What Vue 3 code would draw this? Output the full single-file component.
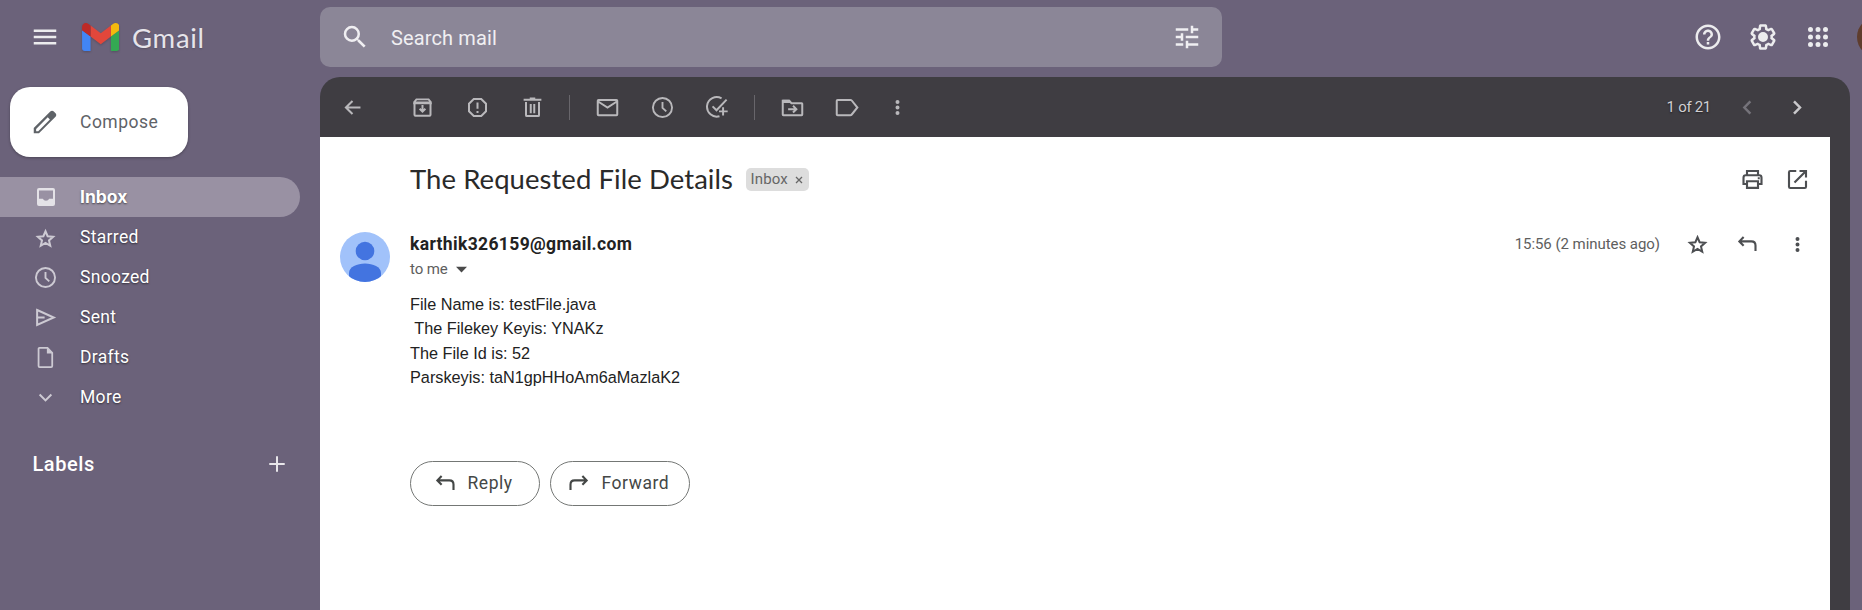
<script setup>
// Filled glyphs use `f`, stroked outlines use `s`; all on a 20-unit grid unless `box` is given.
const icons = {
  back: { s: 'M17 10H4.2M10 4.2 4.2 10l5.8 5.8', sw: 1.8, box: '-1 -1 22 22' },
  archive: { s: 'M3.6 6.2v9.6q0 .7.7.7h11.4q.7 0 .7-.7V6.2M10 8v5M7.7 11l2.3 2.3 2.3-2.3', f: 'M4.8 2.8h10.4l2.2 2.6v1.9H2.6V5.4zm.8 1.3-.9 1h10.6l-.9-1z' },
  spam: { s: 'M7 3.2h6L16.8 7v6L13 16.8H7L3.2 13V7zM10 6v5M10 12.7v1.6' },
  trash: { s: 'M4.8 5.5v10.6q0 .7.7.7h9q.7 0 .7-.7V5.5M8.6 7.2v7.3M11.4 7.2v7.3', f: 'M7.8 2h4.4v1h4.9v1.6H2.9V3h4.9z' },
  mail: { s: 'M2.8 3.9h14.4q.6 0 .6.6v11q0 .6-.6.6H2.8q-.6 0-.6-.6v-11q0-.6.6-.6zM2.5 5.2l7.5 4.9 7.5-4.9' },
  clock: { s: 'M10 .9a9.1 9.1 0 1 0 0 18.2a9.1 9.1 0 1 0 0-18.2zM10 4.8v5.5l3.6 3.4', sw: 1.8 },
  task: { s: 'M14.2 2.1A8.9 8.9 0 1 0 12.3 18.4M6 9.4l3.6 3.6 9.2-9.8M15.6 10.3v7.4M11.9 14h7.9', box: '0 0 21 20', sw: 1.8 },
  move: { s: 'M2.2 4.6h5l2 1.9h8.2q.4 0 .4.5v8.6q0 .5-.5.5H2.7q-.5 0-.5-.5zM6.5 11.3h6.3M10.4 8.6l2.7 2.7-2.7 2.7', f: 'M2 3.8h5.8l1.8 2.6H2z' },
  label: { s: 'M2.1 3.9h10.2q.7 0 1.1.5l4.5 5.6-4.5 5.6q-.4.5-1.1.5H2.1q-.7 0-.7-.6V4.5q0-.6.7-.6z' },
  more: { f: 'M10 4a1.6 1.6 0 1 1 0 3.2 1.6 1.6 0 0 1 0-3.2zm0 4.4a1.6 1.6 0 1 1 0 3.2 1.6 1.6 0 0 1 0-3.2zm0 4.4a1.6 1.6 0 1 1 0 3.2 1.6 1.6 0 0 1 0-3.2z' },
  prev: { s: 'M12.3 5.1 7.5 10l4.8 4.9', sw: 2 },
  next: { s: 'M7.2 5.1l4.8 4.9-4.8 4.9', sw: 2 },
  print: { s: 'M5.6 6.2V3.2h8.8v3M5.6 13.6H2.8V8.5Q2.8 6.6 4.6 6.6h10.8q1.8 0 1.8 1.9v5.1h-2.8M5.6 11.4h8.8v5.3H5.6zM14.2 9h1.6', sw: 1.7 },
  open: { s: 'M9 3.2H4.2q-1 0-1 1v11.6q0 1 1 1h11.6q1 0 1-1V11M11.6 3.2h5.2v5.2M16.6 3.4 7.6 12.4', sw: 1.7 },
  star: { s: 'M10 4.2l1.7 4 4.4.4-3.3 2.9 1 4.3-3.8-2.3-3.8 2.3 1-4.3-3.3-2.9 4.4-.4z', sw: 1.6 },
  reply: { s: 'M6.9 4 3.5 7.5l3.4 3.5M3.7 7.5h9.4q3.3 0 3.3 3.3v4.4', sw: 1.7 },
  forward: { s: 'M13.1 4l3.4 3.5-3.4 3.5M16.3 7.5H6.9q-3.3 0-3.3 3.3v4.4', sw: 1.7 },
  inbox: { f: 'M3 1h14q2 0 2 2v14q0 2-2 2H3q-2 0-2-2V3q0-2 2-2zm0 2.6v8.1h3.8q.9 2 3.2 2t3.2-2H17V3.6z' },
  sent: { s: 'M3.3 4 16.6 10 3.3 16zM3.3 10h6' },
  draft: { s: 'M4.4.9h7.5l4.5 4.6v12.6q0 1-1 1H4.4q-1 0-1-1V1.9q0-1 1-1z', f: 'M11.3.9l5.3 5.3h-5.3z', sw: 1.7 },
  chevron: { s: 'M4.4 7.2 10 12.8l5.6-5.6', sw: 1.9 },
  plus: { s: 'M10 1.5v17M1.5 10h17', sw: 2.2, box: '1.2 1.2 17.6 17.6' },
  pencil: { f: 'M20.41 4.94l-1.35-1.35c-.78-.78-2.05-.78-2.83 0L3 16.82V21h4.18L20.41 7.77c.79-.78.79-2.05 0-2.83zM6.6 19.4H4.9v-1.8L14.2 8.2l1.7 1.7z', box: '0 0 24 24' },
  menu: { f: 'M3 18h18v-2H3v2zm0-5h18v-2H3v2zm0-7v2h18V6H3z', box: '0 0 24 24' },
  search: { f: 'M15.5 14h-.79l-.28-.27A6.47 6.47 0 0 0 16 9.5 6.5 6.5 0 1 0 9.5 16c1.61 0 3.09-.59 4.23-1.57l.27.28v.79l5 4.99L20.49 19zm-6 0a4.5 4.5 0 1 1 0-9 4.5 4.5 0 0 1 0 9z', box: '0 0 24 24' },
  tune: { f: 'M3 17v2h6v-2zM3 5v2h10V5zm10 16v-2h8v-2h-8v-2h-2v6zM7 9v2H3v2h4v2h2V9zm14 4v-2H11v2zm-6-4h2V7h4V5h-4V3h-2z', box: '0 0 24 24' },
  help: { f: 'M11 18h2v-2h-2v2zm1-16C6.48 2 2 6.48 2 12s4.48 10 10 10 10-4.48 10-10S17.52 2 12 2zm0 18c-4.41 0-8-3.59-8-8s3.59-8 8-8 8 3.59 8 8-3.59 8-8 8zm0-14c-2.21 0-4 1.79-4 4h2c0-1.1.9-2 2-2s2 .9 2 2c0 2-3 1.75-3 5h2c0-2.25 3-2.5 3-5 0-2.21-1.79-4-4-4z', box: '0 0 24 24' },
  gear: { f: 'M13.85 22.25h-3.7c-.74 0-1.36-.54-1.45-1.27l-.27-1.89c-.27-.14-.53-.29-.79-.46l-1.8.72c-.7.26-1.47-.03-1.81-.65L2.2 15.53c-.35-.66-.2-1.44.36-1.88l1.53-1.19c-.01-.15-.02-.3-.02-.46 0-.15.01-.31.02-.46l-1.52-1.19c-.59-.45-.74-1.26-.37-1.88l1.85-3.19c.34-.62 1.11-.9 1.79-.63l1.81.73c.26-.17.52-.32.78-.46l.27-1.91c.09-.7.71-1.25 1.44-1.25h3.7c.74 0 1.36.54 1.45 1.27l.27 1.89c.27.14.53.29.79.46l1.8-.72c.71-.26 1.48.03 1.82.65l1.84 3.18c.36.66.2 1.44-.36 1.88l-1.52 1.19c.01.15.02.3.02.46s-.01.31-.02.46l1.52 1.19c.56.45.72 1.23.37 1.86l-1.86 3.22c-.34.62-1.11.9-1.8.63l-1.8-.72c-.26.17-.52.32-.78.46l-.27 1.91c-.1.68-.72 1.22-1.46 1.22zm-3.23-2h2.76l.37-2.55.53-.22c.44-.18.88-.44 1.34-.78l.45-.34 2.38.96 1.38-2.4-2.03-1.58.07-.56c.03-.26.06-.51.06-.78s-.03-.53-.06-.78l-.07-.56 2.03-1.58-1.39-2.4-2.39.96-.45-.35c-.42-.32-.87-.58-1.33-.77l-.52-.22-.37-2.55h-2.76l-.37 2.55-.53.21c-.44.19-.88.44-1.34.79l-.45.33-2.38-.95-1.39 2.39 2.03 1.58-.07.56a7 7 0 0 0-.06.79c0 .26.02.53.06.78l.07.56-2.03 1.58 1.38 2.4 2.39-.96.45.35c.43.33.86.58 1.33.77l.53.22.38 2.55zM12 8a4 4 0 1 1 0 8 4 4 0 0 1 0-8z', box: '0 0 24 24' },
  apps: { f: [6, 12, 18].flatMap(y => [6, 12, 18].map(x => `M${x - 2} ${y}a2 2 0 1 1 4 0 2 2 0 1 1-4 0z`)).join(''), box: '0 0 24 24' },
  close: { s: 'M4 4l12 12M16 4 4 16', sw: 2.6 },
  caret: { f: 'M0 5h20L10 15.5z' }
}

const Icon = (props) => {
  const i = icons[props.name]
  return h('svg', { viewBox: i.box || '0 0 20 20', fill: 'none', 'aria-hidden': 'true' }, [
    i.s && h('path', { d: i.s, stroke: 'currentColor', 'stroke-width': i.sw || 1.6 }),
    i.f && h('path', { d: i.f, fill: 'currentColor', 'fill-rule': 'evenodd' })
  ])
}
Icon.props = ['name']

const nav = [
  { id: 'inbox', icon: 'inbox', text: 'Inbox' },
  { id: 'starred', icon: 'star', text: 'Starred' },
  { id: 'snoozed', icon: 'clock', text: 'Snoozed' },
  { id: 'sent', icon: 'sent', text: 'Sent' },
  { id: 'drafts', icon: 'draft', text: 'Drafts' },
  { id: 'more-nav', icon: 'chevron', text: 'More' }
]
const groups = [['archive', 'spam', 'trash'], ['mail', 'clock', 'task'], ['move', 'label', 'more']]
</script>

<script>
import { h } from 'vue'
</script>

<template>
  <div class="app">
    <aside class="side">
      <div class="brand">
        <Icon class="menu" name="menu" />
        <svg class="logo" viewBox="52 42 88 66" aria-hidden="true">
          <path fill="#4285f4" d="M58 108h14V74L52 59v43c0 3.32 2.69 6 6 6" />
          <path fill="#34a853" d="M120 108h14c3.32 0 6-2.69 6-6V59l-20 15" />
          <path fill="#f4b90e" d="M120 48v26l20-15v-8c0-7.42-8.47-11.65-14.4-7.2" />
          <path fill="#e2473b" d="M72 74V48l24 18 24-18v26L96 92" />
          <path fill="#bd2a26" d="M52 51v8l20 15V48l-5.6-4.2c-5.94-4.45-14.4-.22-14.4 7.2" />
        </svg>
        <span class="wordmark">Gmail</span>
      </div>
      <button class="compose"><Icon name="pencil" /><span>Compose</span></button>
      <nav>
        <a v-for="n in nav" :key="n.id" :class="['item', n.id]"><Icon :name="n.icon" /><span>{{ n.text }}</span></a>
      </nav>
      <div class="labels"><span>Labels</span><Icon name="plus" /></div>
    </aside>

    <div class="right">
      <header class="top">
        <div class="search"><Icon name="search" /><span>Search mail</span><Icon name="tune" /></div>
        <div class="tools"><Icon name="help" /><Icon name="gear" /><Icon name="apps" /><i class="account"></i></div>
      </header>

      <main class="panel">
        <div class="bar">
          <Icon class="back" name="back" />
          <div v-for="(g, k) in groups" :key="k" class="group"><Icon v-for="n in g" :key="n" :name="n" :class="n" /></div>
          <span class="count">1 of 21</span>
          <Icon class="prev" name="prev" />
          <Icon class="next" name="next" />
        </div>

        <section class="mail-view">
          <div class="subject">
            <h1>The Requested File Details</h1>
            <span class="chip"><span>Inbox</span><Icon name="close" /></span>
            <Icon class="print" name="print" />
            <Icon name="open" />
          </div>
          <div class="message">
            <svg class="avatar" viewBox="0 0 50 50" aria-hidden="true">
              <defs><clipPath id="disc"><circle cx="25" cy="25" r="25" /></clipPath></defs>
              <g clip-path="url(#disc)">
                <path fill="#a1c2fa" d="M0 0h50v50H0z" />
                <circle cx="25" cy="19" r="9.3" fill="#4374e0" />
                <path fill="#4374e0" d="M9 50V41c0-6 8-9.5 16-9.5S41 35 41 41v9z" />
              </g>
            </svg>
            <div class="content">
              <div class="meta">
                <div>
                  <div class="sender">karthik326159@gmail.com</div>
                  <div class="to"><span>to me</span><Icon name="caret" /></div>
                </div>
                <div class="actions">
                  <span class="time">15:56 (2 minutes ago)</span>
                  <Icon class="fav" name="star" /><Icon name="reply" /><Icon name="more" />
                </div>
              </div>
              <pre class="body">File Name is: testFile.java
 The Filekey Keyis: YNAKz
The File Id is: 52
Parskeyis: taN1gpHHoAm6aMazlaK2</pre>
              <div class="buttons">
                <button class="reply"><Icon name="reply" /><span>Reply</span></button>
                <button class="forward"><Icon name="forward" /><span>Forward</span></button>
              </div>
            </div>
          </div>
        </section>
      </main>
    </div>
  </div>
</template>

<style>
body { overflow: hidden; }
</style>

<style scoped>
.app { display: flex; width: 1862px; height: 610px; overflow: hidden; background: #6b627a; font-family: Roboto, "Liberation Sans", sans-serif; color: #fff; }
svg { width: 25px; height: 25px; flex: none; display: block; }
button { border: 0; padding: 0; font: inherit; box-sizing: border-box; display: flex; align-items: center; }

.side { width: 320px; flex: none; }
.brand { height: 87px; box-sizing: border-box; padding: 0 0 13px 30px; display: flex; align-items: center; color: #ececee; }
.brand .menu { width: 30px; height: 30px; }
.brand .logo { width: 37.5px; height: 28px; margin-left: 21.5px; filter: drop-shadow(0 1px 1px rgba(0,0,0,.2)); }
.wordmark { margin-left: 13px; padding-top: 1px; font: 27.5px/34px Lato, sans-serif; letter-spacing: .7px; color: #e6e4ea; text-shadow: 0 1px 2px rgba(0,0,0,.2); }
.compose { width: 178px; height: 70px; margin-left: 10px; padding-left: 20px; border-radius: 20px; background: #fff; color: #5f6368; font-size: 17.5px; font-weight: 450; letter-spacing: .5px; box-shadow: 0 1px 3px rgba(0,0,0,.3); }
.compose svg { width: 30px; height: 30px; margin-right: 20px; }
nav { margin-top: 20px; }
.item { display: flex; align-items: center; width: 300px; height: 40px; box-sizing: border-box; padding-left: 33px; border-radius: 0 20px 20px 0; font-size: 17.5px; font-weight: 450; letter-spacing: .32px; text-shadow: 0 1px 2px rgba(0,0,0,.55); }
.item svg { margin-right: 22px; color: #cdcad3; }
.item.inbox { background: #9991a3; font: 700 17.5px Inter, sans-serif; letter-spacing: 0; }
.item.inbox span { padding-bottom: 1px; }
.item.inbox svg { width: 20px; height: 20px; margin: 0 24.5px 0 2.5px; color: #e4e2e7; }
.item.starred svg { margin-top: 2px; }
.item.snoozed svg, .item.drafts svg { width: 21px; height: 21px; margin: 0 24px 0 2px; }
.item.more-nav svg { width: 21px; height: 21px; margin: 0 24px 0 2px; }
.labels { display: flex; align-items: center; justify-content: space-between; width: 253px; margin: 34px 0 0 32.5px; height: 25px; font-size: 20px; font-weight: 500; letter-spacing: .55px; }
.labels svg { width: 16px; height: 16px; margin-right: 1px; color: #e8e6ea; }

.right { flex: 1; min-width: 0; }
.top { display: flex; height: 60px; padding: 7px 0 10px; }
.search { width: 902px; flex: none; box-sizing: border-box; border-radius: 10px; background: #8b8697; display: flex; align-items: center; padding: 0 20px; color: #f0eff2; font-size: 20px; letter-spacing: .13px; }
.search svg { width: 30px; height: 30px; }
.search span { margin: 0 auto 0 21px; padding-top: 1px; }
.tools { display: flex; flex: none; align-items: center; gap: 25px; margin-left: 471px; color: #ececee; }
.tools svg { width: 30px; height: 30px; }
.account { width: 40px; height: 40px; margin-left: -1px; border-radius: 50%; background: #5f3d2d; flex: none; }

.panel { width: 1530px; height: 533px; background: #3f3d42; border-radius: 20px 20px 0 0; overflow: hidden; }
.bar { display: flex; align-items: center; height: 60px; padding-left: 20px; color: #b9b8bb; }
.back { margin-right: 44.5px; width: 25px; }
.group { display: flex; gap: 30px; }
.group + .group { margin-left: 24px; padding-left: 26px; background: linear-gradient(#68666b, #68666b) 0 50% / 1px 25px no-repeat; }
.group svg.clock { width: 21px; height: 21px; margin: 2px; }
.group svg.task { width: 23px; height: 22px; margin: 1px; }
.group svg.more { margin-left: -5px; }
.count { margin-left: auto; font-size: 15px; letter-spacing: -.3px; color: #d0cfd2; text-shadow: 0 1px 2px rgba(0,0,0,.5); }
.prev { margin-left: 24px; color: #75737a; }
.next { margin: 0 40px 0 25px; color: #c9c8cb; }

.mail-view { width: 1510px; height: 473px; box-sizing: border-box; background: #fff; color: #1f1f1f; padding-top: 19px; }
.subject { display: flex; align-items: center; height: 46px; padding: 0 20px 0 90px; color: #4d4f52; }
h1 { margin: 0; font: 27.5px/46px Lato, sans-serif; letter-spacing: .06px; color: #2a2a2a; width: 336px; white-space: nowrap; }
.chip { display: flex; align-items: center; width: 63px; height: 23px; box-sizing: border-box; padding-left: 4.5px; border-radius: 5px; background: #ddd; color: #666; font-size: 15px; letter-spacing: .15px; }
.chip svg { width: 10px; height: 10px; margin-left: 6.5px; margin-top: 2px; }
.print { margin: 0 20px 0 auto; }
.message { display: flex; padding: 30px 20px 0; }
.avatar { width: 50px; height: 50px; }
.content { flex: 1; margin-left: 20px; }
.meta { display: flex; justify-content: space-between; }
.sender { font: 700 17.5px/24px Roboto, sans-serif; letter-spacing: .35px; color: #222; }
.to { display: flex; align-items: center; height: 26px; font-size: 15px; letter-spacing: -.1px; color: #5e5e5e; }
.to svg { width: 11px; height: 11px; margin-left: 8px; color: #4a4a4a; }
.actions { display: flex; align-items: center; height: 24px; gap: 25px; color: #4d4f52; }
.time { font-size: 15px; letter-spacing: -.05px; color: #5e5e5e; }
.body { margin: 10px 0 0; font: 16.25px/24.4px "Liberation Sans", Arial, sans-serif; color: #222; }
.buttons { display: flex; gap: 10px; margin-top: 71px; }
.buttons button { height: 45px; border: 1px solid #747775; border-radius: 23px; background: #fff; color: #444746; font-size: 17.5px; font-weight: 450; letter-spacing: .55px; }
.reply { width: 130px; }
.forward { width: 140px; }
.reply svg { margin: 0 10px 0 21.5px; }
.forward svg { margin: 0 10.5px 0 15px; }
</style>
